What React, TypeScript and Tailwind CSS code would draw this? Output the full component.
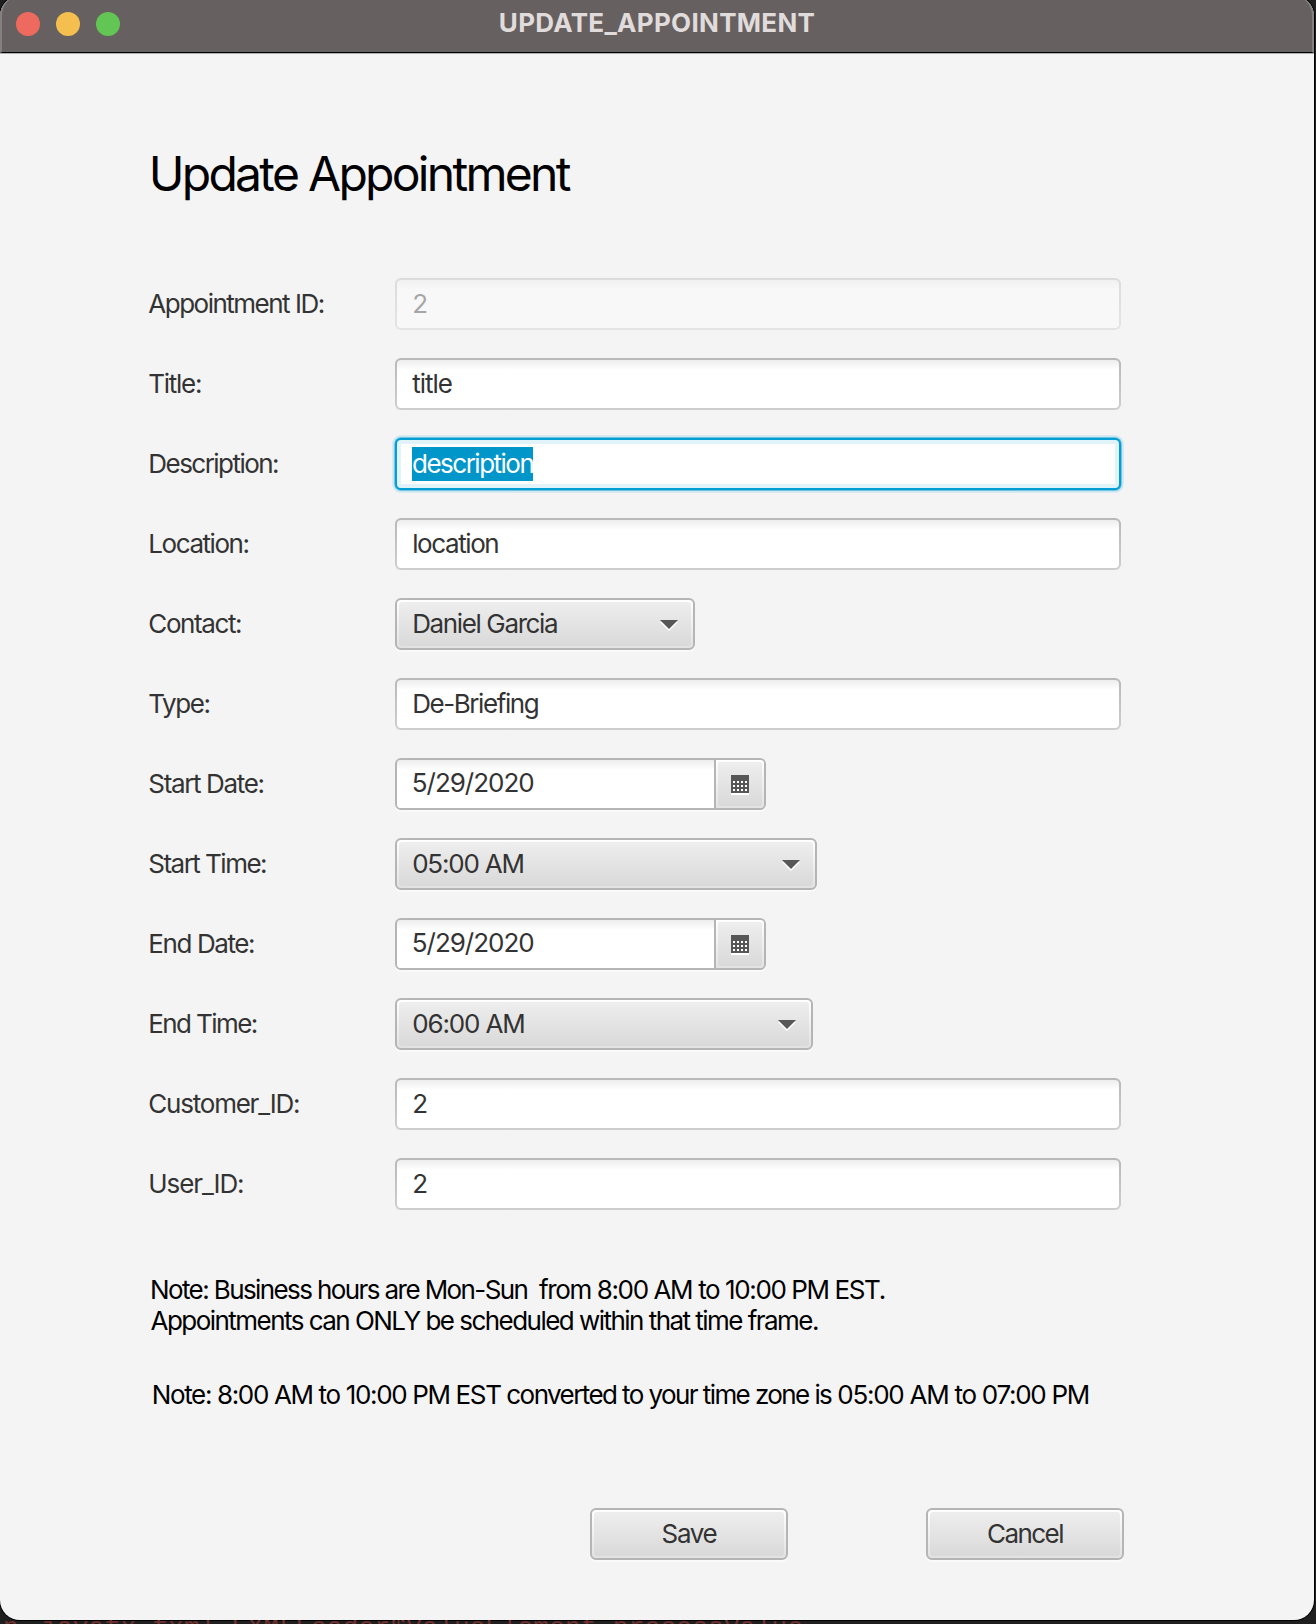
import React from 'react';

const LABEL = 'w-[246.7px] shrink-0 whitespace-pre text-[26px] leading-[52px] text-[#333333]';

const FIELD_BG =
  '[background:linear-gradient(#ededed,#ffffff_10px)_padding-box,linear-gradient(#b8b8b8,#cecece)_border-box]';

function Row({ label, track, children }: { label: string; track: string; children: React.ReactNode }) {
  return (
    <div className="flex h-[52px] items-center">
      <label className={`${LABEL} ${track}`}>{label}</label>
      {children}
    </div>
  );
}

function Field({ value, track, disabled }: { value: string; track: string; disabled?: boolean }) {
  return (
    <div
      className={`flex h-[52px] w-[726px] rounded-[6px] border-2 border-transparent pl-[15.2px] text-[26px] leading-[48px] text-[#333333] ${FIELD_BG} ${disabled ? 'opacity-40' : ''}`}
    >
      <span className={track}>{value}</span>
    </div>
  );
}

function FocusedField({ value, track }: { value: string; track: string }) {
  return (
    <div className="flex h-[52px] w-[726px] items-center rounded-[6px] border-2 border-[#039ed3] bg-white pl-[15px] text-[26px] shadow-[0_0_0_0.7px_#4fb9dd,0_0_0_2.7px_#cfe6f0,inset_0_0_0_4px_#e0f3f8]">
      <span className={`h-[34px] w-[121px] bg-[#0096c9] leading-[33px] text-white ${track}`}>{value}</span>
    </div>
  );
}

function Arrow() {
  return (
    <svg className="mt-1" width="18" height="12" viewBox="0 0 18 12">
      <path d="M0 2h18L9 11z" fill="#fff" />
      <path d="M0 0h18L9 9z" fill="#575757" />
    </svg>
  );
}

function Combo({ value, width, track }: { value: string; width: string; track: string }) {
  return (
    <div
      className={`h-[52px] rounded-[6px] border-2 border-[#b5b5b5] bg-linear-to-b from-white to-[#e2e2e2] p-[2px] shadow-[0_2px_0_#fafafa] ${width}`}
    >
      <div className="flex h-full items-center justify-between rounded-[3px] bg-linear-to-b from-[#eeeeee] to-[#d9d9d9] pr-[13px] pl-[13.2px] text-[26px] leading-[44px] text-[#333333]">
        <span className={track}>{value}</span>
        <Arrow />
      </div>
    </div>
  );
}

function CalendarIcon() {
  const cols = [2, 6, 10, 14];
  const rows = [6, 10, 14];
  return (
    <svg width="18" height="20" viewBox="0 0 18 20">
      <rect y="2" width="18" height="18" fill="#fff" />
      <rect width="18" height="18" fill="#575757" />
      {rows.map((y) => cols.map((x) => <rect key={`${x}-${y}`} x={x} y={y} width="2" height="2" fill="#fff" />))}
    </svg>
  );
}

function DatePicker({ value }: { value: string }) {
  return (
    <div className="flex h-[52px] w-[371px] overflow-hidden rounded-[6px] border-2 border-[#b5b5b5] shadow-[0_2px_0_#fafafa]">
      <div className="w-[317px] bg-[linear-gradient(#ededed,#ffffff_10px)] pl-[14.8px] text-[26px] leading-[46px] text-[#333333]">
        <span className="tracking-[-1.02px]">{value}</span>
      </div>
      <div className="flex-1 border-l-2 border-[#b5b5b5] bg-linear-to-b from-white to-[#e2e2e2] p-[2px]">
        <div className="flex h-full items-center justify-center rounded-[2px] bg-linear-to-b from-[#eeeeee] to-[#d9d9d9] pt-[2px]">
          <CalendarIcon />
        </div>
      </div>
    </div>
  );
}

function Button({ label, track }: { label: string; track: string }) {
  return (
    <button className="h-[52px] w-[198px] rounded-[6px] border-2 border-[#b5b5b5] bg-linear-to-b from-white to-[#e2e2e2] p-[2px] shadow-[0_2px_0_#fafafa]">
      <span
        className={`flex h-full justify-center rounded-[3px] bg-linear-to-b from-[#eeeeee] to-[#d9d9d9] text-[26px] leading-[44px] text-[#333333] ${track}`}
      >
        {label}
      </span>
    </button>
  );
}

export default function App() {
  return (
    <div className="h-[1624px] w-[1316px] overflow-hidden bg-[#1f1f1f] font-['Inter',sans-serif]">
      <div className="-mt-1 flex h-[1624px] w-[1314px] flex-col overflow-hidden rounded-[20px] bg-[#f4f4f4] shadow-[0_0_0_1px_#000000]">
        <header className="grid h-[58px] shrink-0 grid-cols-[1fr_auto_1fr] rounded-t-[20px] border-b border-[#b0b0b0] bg-[#676060]">
          <div className="flex h-[57px] gap-4 rounded-tl-[20px] border-b border-l-2 border-b-black border-l-[#858080] pt-4 pl-[14px]">
            <span className="size-6 rounded-full bg-[#ee6a5f]" />
            <span className="size-6 rounded-full bg-[#f5bf4f]" />
            <span className="size-6 rounded-full bg-[#62c554]" />
          </div>
          <h1 className="h-[57px] border-b border-black pt-[10.5px] text-[26px] leading-[32px] font-bold tracking-[0.3px] text-[#e1dcdc]">
            UPDATE_APPOINTMENT
          </h1>
          <div className="h-[57px] rounded-tr-[20px] border-r-2 border-b border-r-[#858080] border-b-black" />
        </header>

        <main className="flex flex-col pl-[148.3px]">
          <h2 className="mt-[91.5px] pl-[0.4px] text-[48px] leading-[56px] tracking-[-2.7px] text-black">
            Update Appointment
          </h2>

          <form className="mt-[76.5px] flex flex-col gap-7">
            <Row label="Appointment ID:" track="tracking-[-1.5px]">
              <Field value="2" track="tracking-normal" disabled />
            </Row>
            <Row label="Title:" track="tracking-[-1.27px]">
              <Field value="title" track="tracking-[-1.02px]" />
            </Row>
            <Row label="Description:" track="tracking-[-1.54px]">
              <FocusedField value="description" track="tracking-[-1.5px]" />
            </Row>
            <Row label="Location:" track="tracking-[-1.44px]">
              <Field value="location" track="tracking-[-1.4px]" />
            </Row>
            <Row label="Contact:" track="tracking-[-1.4px]">
              <Combo value="Daniel Garcia" width="w-[300px]" track="tracking-[-1.37px]" />
            </Row>
            <Row label="Type:" track="tracking-[-1.41px]">
              <Field value="De-Briefing" track="tracking-[-1.43px]" />
            </Row>
            <Row label="Start Date:" track="tracking-[-1.35px]">
              <DatePicker value="5/29/2020" />
            </Row>
            <Row label="Start Time:" track="tracking-[-1.52px]">
              <Combo value="05:00 AM" width="w-[422px]" track="tracking-[-1.2px]" />
            </Row>
            <Row label="End Date:" track="tracking-[-1.41px]">
              <DatePicker value="5/29/2020" />
            </Row>
            <Row label="End Time:" track="tracking-[-1.6px]">
              <Combo value="06:00 AM" width="w-[418px]" track="tracking-[-1.15px]" />
            </Row>
            <Row label="Customer_ID:" track="tracking-[-1.22px]">
              <Field value="2" track="tracking-normal" />
            </Row>
            <Row label="User_ID:" track="tracking-[-1.1px]">
              <Field value="2" track="tracking-normal" />
            </Row>
          </form>

          <div className="mt-16 text-[26px] leading-[31px] whitespace-pre text-black">
            <p className="pl-[1.7px]">
              <span className="tracking-[-1.6px]">Note: Business hours are Mon-Sun</span>
              <span className="tracking-[-1.39px]">{'  from 8:00 AM to 10:00 PM EST.'}</span>
            </p>
            <p className="pl-[2.2px] tracking-[-1.535px]">
              Appointments can ONLY be scheduled within that time frame.
            </p>
            <p className="mt-[43px] pl-[3.4px]">
              <span className="tracking-[-1.35px]">Note: 8:00 AM to 10:00 PM EST</span>
              <span className="tracking-[-1.58px]"> converted to your time zone is</span>
              <span className="tracking-[-1.27px]"> 05:00 AM to 07:00 PM</span>
            </p>
          </div>

          <div className="mt-[98px] flex gap-[138px] pl-[441.7px]">
            <Button label="Save" track="tracking-[-1.33px]" />
            <Button label="Cancel" track="tracking-[-1.53px]" />
          </div>
        </main>
      </div>

      <div className="flex h-1 overflow-hidden pl-[3px] font-['Liberation_Mono',monospace] text-[26px] leading-[26px] text-[#6f302e]">
        <span className="-mt-[5px] w-[38px] shrink-0">n</span>
        <span className="-mt-[5px] tracking-[0.28px]">javafx.fxml.FXMLLoader$ValueElement.processValue</span>
      </div>
    </div>
  );
}
